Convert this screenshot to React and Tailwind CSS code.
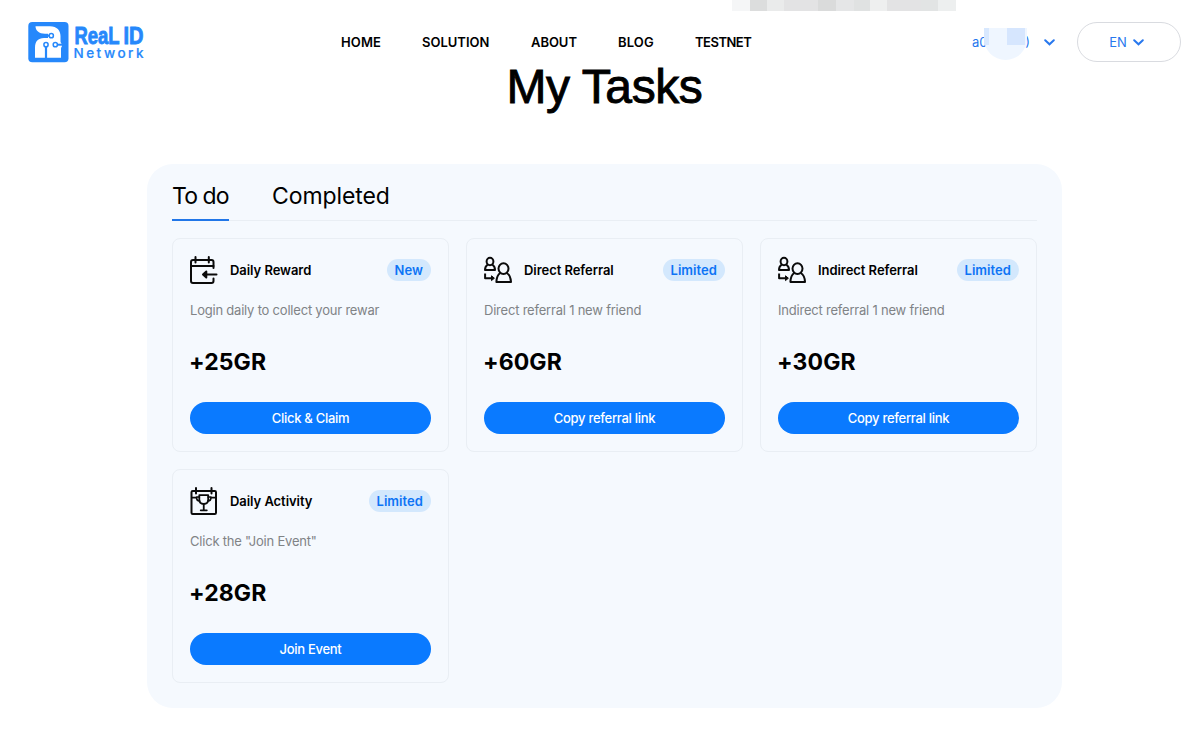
const NAV_ITEMS = [
  { label: 'HOME', style: 'w-[40px] tracking-[0.100px]' },
  { label: 'SOLUTION', style: 'w-[68px] tracking-[0px]' },
  { label: 'ABOUT', style: 'w-[46px] tracking-[-0.050px]' },
  { label: 'BLOG', style: 'w-[36px] tracking-[0.150px]' },
  { label: 'TESTNET', style: 'w-[57px] tracking-[-0.500px]' },
];

const TASKS = [
  {
    id: 'daily-reward',
    icon: CalendarArrowIcon,
    title: 'Daily Reward',
    badge: 'New',
    description: 'Login daily to collect your rewar',
    reward: '+25GR',
    action: 'Click & Claim',
  },
  {
    id: 'direct-referral',
    icon: ReferralIcon,
    title: 'Direct Referral',
    badge: 'Limited',
    description: 'Direct referral 1 new friend',
    reward: '+60GR',
    action: 'Copy referral link',
  },
  {
    id: 'indirect-referral',
    icon: ReferralIcon,
    title: 'Indirect Referral',
    badge: 'Limited',
    description: 'Indirect referral 1 new friend',
    reward: '+30GR',
    action: 'Copy referral link',
  },
  {
    id: 'daily-activity',
    icon: CalendarTrophyIcon,
    title: 'Daily Activity',
    badge: 'Limited',
    description: 'Click the "Join Event"',
    reward: '+28GR',
    action: 'Join Event',
  },
];

function CalendarArrowIcon() {
  return (
    <svg className="-mt-px h-7 w-7 shrink-0" viewBox="0 0 28 28" fill="none" stroke="#0b0b0b" strokeWidth="2" strokeLinecap="round" strokeLinejoin="round">
      <path d="M23.500 12V6A2 2 0 0 0 21.500 4H3A2 2 0 0 0 1 6V25A2 2 0 0 0 3 27H21.500A2 2 0 0 0 23.500 25V22.500" />
      <path d="M1 10H23.500M5.500 1V6.500M18.800 1V6.500M26.500 18.500H14" />
      <path d="M16.300 15.500L13 18.500L16.300 21.500Z" fill="#0b0b0b" />
    </svg>
  );
}

function ReferralIcon() {
  return (
    <svg className="-mt-px h-7 w-7 shrink-0" viewBox="0 0 28 28" fill="none" stroke="#0b0b0b" strokeWidth="2" strokeLinejoin="round">
      <ellipse cx="6" cy="5.500" rx="3.400" ry="3.700" />
      <path d="M3.800 8.500C1.900 9.700 1 11.500 1 14H11C11 11.500 10.100 9.700 8.200 8.500" />
      <ellipse cx="19.500" cy="12.600" rx="5" ry="5.300" />
      <path d="M16.300 17C13.600 18.700 12.600 21.500 12.400 25.900H27C26.800 21.500 25.700 18.700 22.700 17" />
      <path d="M1.100 17.500V22.200H8" />
      <path d="M7.500 19.800L10.400 22.200L7.500 24.600Z" fill="#0b0b0b" strokeWidth="1" />
    </svg>
  );
}

function CalendarTrophyIcon() {
  return (
    <svg className="-mt-px h-7 w-7 shrink-0" viewBox="0 0 28 28" fill="none" stroke="#0b0b0b" strokeWidth="2" strokeLinecap="round" strokeLinejoin="round">
      <rect x="1.500" y="4" width="24.500" height="23" rx="1.200" />
      <path d="M6 1V6.500M21.500 1V6.500" />
      <path d="M9.300 8.200H18.200V12.500C18.200 15.200 16.400 17 13.750 17S9.300 15.200 9.300 12.500Z" strokeWidth="1.800" />
      <path d="M2 10.600H6.500M21 10.600H25.500M9.300 10H6.500C6.500 12.500 7.600 14 9.600 14M18.200 10H21C21 12.500 19.900 14 17.900 14" strokeWidth="1.700" />
      <path d="M13.750 17V23M10.700 23.300H16.800" strokeWidth="1.800" />
    </svg>
  );
}

function ChevronIcon() {
  return (
    <svg className="h-[7px] w-[11px] shrink-0" viewBox="0 0 11 7" fill="none" stroke="#2878ee" strokeWidth="2" strokeLinecap="round">
      <path d="M1.200 1.300L5.500 5.300L9.800 1.300" />
    </svg>
  );
}

function Logo() {
  return (
    <svg className="h-[42px] w-[122px]" viewBox="0 0 122 42" fill="#2688fb">
      <rect x="0.300" y="1" width="40.200" height="40.200" rx="4" />
      {/* Letter body, circuit traces are drawn over it */}
      <path d="M7.500 5.200H22C29 5.200 32.500 9.500 32.500 15V20.500C32.500 22 34 22.500 34 24.500C34 26 33 26 33 28V36.800H7V26.500C7 20.500 10 17 16 17H20V12.700H17C11 12.700 7.500 9.500 7.500 5.200Z" fill="#fff" />
      <g stroke="#2688fb" strokeWidth="1.500">
        <path d="M12 14.700H21" strokeWidth="2" />
        <path d="M18 26V37.500" strokeWidth="2.200" />
        <path d="M29.500 23.700H35" strokeWidth="2" />
        <g fill="#fff">
          <circle cx="23.300" cy="14.700" r="2.100" />
          <circle cx="18" cy="23.700" r="2.100" />
          <circle cx="27.300" cy="23.700" r="2.100" />
        </g>
      </g>
      <g className="font-['Liberation_Sans',sans-serif] text-[24px] font-bold" stroke="#2688fb" strokeWidth="0.900">
        <text x="46.500" y="23" textLength="45" lengthAdjust="spacingAndGlyphs">ReaL</text>
        <text x="95.500" y="23" textLength="20" lengthAdjust="spacingAndGlyphs">ID</text>
      </g>
      <text x="45.500" y="36.800" className="font-['Inter',sans-serif] text-[13.500px] font-medium" stroke="#2688fb" strokeWidth="0.200" textLength="70">Network</text>
    </svg>
  );
}

function Header() {
  return (
    <header className="relative flex h-16 items-start">
      <div className="ml-7 mt-[21px] w-[313px]">
        <Logo />
      </div>
      <nav className="mt-8 flex gap-[41px] text-[13px] font-semibold leading-5 text-black">
        {NAV_ITEMS.map((item) => (
          <a key={item.label} className={`${item.style} whitespace-nowrap`}>{item.label}</a>
        ))}
      </nav>

      <div className="ml-auto mr-[19px] flex items-start">
        <div className="relative mr-[22px] mt-8 flex h-5 w-[83px] items-center text-[13px] text-[#2878ee]">
          <span className="pt-0.5">a0</span>
          <span className="ml-auto mr-[14px]">)</span>
          <ChevronIcon />
          {/* Masked account name */}
          <div className="absolute left-[12px] top-[-4px] h-8 w-[44px]">
            <div className="absolute left-0 top-0 h-8 w-[43px] rounded-b-full bg-[#eff6ff]" />
            <div className="absolute left-0 top-0 h-[17px] w-[5px] bg-[#d8e8fe]" />
            <div className="absolute left-[23px] top-0 h-[17px] w-[18px] bg-[#d6e6fe]" />
          </div>
        </div>
        <button className="mt-[22px] flex h-[40px] w-[104px] items-center justify-center gap-[6px] rounded-full border border-[#d9dbe0] pr-[5px] text-[13px] text-[#2878ee]">
          <span className="pt-px">EN</span>
          <ChevronIcon />
        </button>
      </div>

      <div className="absolute left-[732px] top-0 flex h-[11px]">
        <div className="w-[18px] bg-[#f5f6f7]" />
        <div className="w-[17px] bg-[#dcdddd]" />
        <div className="w-[17px] bg-[#eaebeb]" />
        <div className="w-[34px] bg-[#e3e3e4]" />
        <div className="w-[18px] bg-[#dadbdb]" />
        <div className="w-[18px] bg-[#e5e6e7]" />
        <div className="w-[16px] bg-[#e0e2e2]" />
        <div className="w-[17px] bg-[#eeefef]" />
        <div className="w-[34px] bg-[#e3e3e4]" />
        <div className="w-[17px] bg-[#e2e4e4]" />
        <div className="w-[18px] bg-[#edefef]" />
      </div>
    </header>
  );
}

function TaskCard({ task }) {
  const Icon = task.icon;

  return (
    <div className="flex h-[214px] flex-col rounded-lg border border-[#e9eef4] px-[17px] pt-4">
      <div className="flex h-[30px] items-center">
        <Icon />
        <h3 className="ml-3 pt-px text-[13px] font-semibold tracking-[-0.050px] text-black">{task.title}</h3>
        <span className="ml-auto flex h-[22px] items-center rounded-full bg-[#d3e8fd] px-2 pt-px text-[13px] font-semibold tracking-[0.050px] text-[#0d74f5]">
          {task.badge}
        </span>
      </div>
      <p className="mt-[15px] text-[13px] leading-5 tracking-[-0.210px] text-[#808386]">{task.description}</p>
      <p className="-ml-px mt-[26px] text-[23px] font-bold leading-8 tracking-[0.100px] text-black">{task.reward}</p>
      <button className="mt-6 h-8 rounded-full bg-[#0a7aff] pt-0.5 text-[13px] font-medium tracking-[-0.280px] text-white">
        {task.action}
      </button>
    </div>
  );
}

export default function App() {
  return (
    <div className="h-[733px] overflow-hidden bg-white font-['Inter',sans-serif]">
      <Header />
      <h1 className="ml-[9px] h-[100px] text-center font-['Liberation_Sans',Arial,sans-serif] text-[48px] leading-[46px] tracking-[-0.400px] text-black [-webkit-text-stroke:0.900px_black]">
        My Tasks
      </h1>

      <main className="ml-[147px] h-[544px] w-[915px] rounded-[26px] bg-[#f5f9fe] px-[25px]">
        <div className="flex h-[57px] gap-[43px] border-b border-[#e9eef4] text-[23px] leading-8 text-black">
          <button className="flex h-[57px] w-[57px] items-start whitespace-nowrap border-b-2 border-[#2176e8] pt-4 tracking-[-0.900px]">To do</button>
          <button className="flex items-start pt-4 tracking-[-0.100px]">Completed</button>
        </div>
        <div className="mt-[17px] grid grid-cols-3 gap-[17px]">
          {TASKS.map((task) => (
            <TaskCard key={task.id} task={task} />
          ))}
        </div>
      </main>
    </div>
  );
}
